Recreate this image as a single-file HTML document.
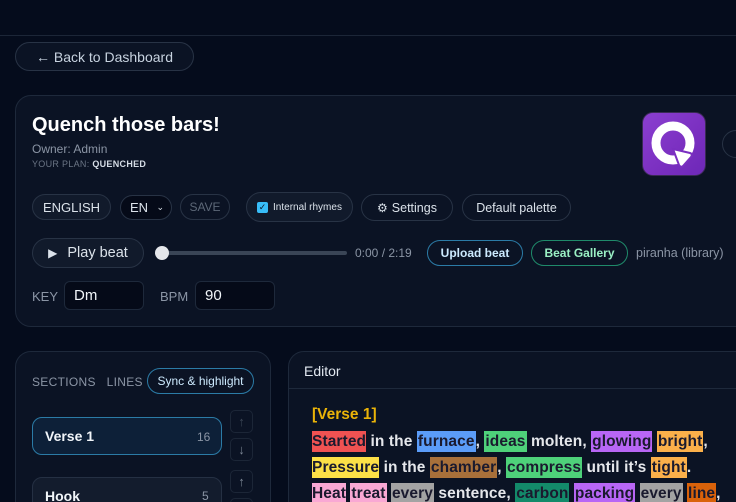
<!DOCTYPE html>
<html><head><meta charset="utf-8"><style>
*{box-sizing:border-box;margin:0;padding:0}
html,body{width:736px;height:502px;overflow:hidden}
body{background:#050c1c;font-family:"Liberation Sans",sans-serif;color:#e2e8f0;position:relative}
.a{position:absolute}
.pill{position:absolute;border:1px solid #283345;border-radius:999px;background:#111a2b;display:flex;align-items:center;justify-content:center;font-size:13px;color:#dbe2ea}
.panel{position:absolute;background:#0b1324;border:1px solid #1e293b;border-radius:16px}
.inp{position:absolute;background:#050a18;border:1px solid #1e293b;border-radius:6px;font-size:15px;color:#f1f5f9;padding-left:9px;display:flex;align-items:center}
.hl{color:#1a1a2e;padding:2px 1px}
.ed{font-size:15.5px;font-weight:bold;line-height:26px;color:#e5e7eb;white-space:nowrap;letter-spacing:.1px}
.arr{position:absolute;width:23px;height:23px;border:1px solid #1c2637;border-radius:5px;color:#7b8594;font-size:13px;display:flex;align-items:center;justify-content:center}
</style></head><body>
<div class="a" style="left:0;top:35px;width:736px;height:1px;background:#1c2637"></div>
<div class="pill" style="left:15px;top:42px;width:179px;height:29px;font-size:14px;background:#0b1324;color:#c8d3e0">← Back to Dashboard</div>

<div class="panel" style="left:15px;top:95px;width:740px;height:232px"></div>
<div class="a" style="left:32px;top:114px;font-size:20px;font-weight:bold;color:#fff">Quench those bars!</div>
<div class="a" style="left:32px;top:142px;font-size:12px;color:#8b95a5">Owner: Admin</div>
<div class="a" style="left:32px;top:159px;font-size:9px;color:#6b7585;letter-spacing:.3px">YOUR PLAN: <b style="color:#d6dde6">QUENCHED</b></div>
<div class="a" style="left:642px;top:112px;width:64px;height:64px;border-radius:11px;background:linear-gradient(135deg,#8b3fd0,#7a2fc0 60%,#6d28b8);border:1px solid #3a2a55">
<svg width="64" height="64" viewBox="0 0 64 64"><circle cx="30" cy="30" r="17" fill="none" stroke="#fff" stroke-width="9"/><path d="M30 36 L47 40 Q50 41 48 44 L40 53 Q38 55 36 52 Z" fill="#fff" stroke="#7a2fc0" stroke-width="2"/></svg></div>
<div class="a" style="left:722px;top:130px;width:30px;height:28px;border:1px solid #283345;border-radius:14px"></div>

<div class="pill" style="left:32px;top:194px;width:79px;height:26px;font-size:13px">ENGLISH</div>
<div class="pill" style="left:120px;top:195px;width:52px;height:25px;background:#050a18;font-size:13px;justify-content:flex-start;padding-left:9px">EN<span style="position:absolute;right:7px;font-size:9px">⌄</span></div>
<div class="pill" style="left:180px;top:194px;width:50px;height:26px;background:#0b1324;color:#5d6878;font-size:12px">SAVE</div>
<div class="pill" style="left:246px;top:192px;width:107px;height:30px;font-size:10px"><span style="width:11px;height:11px;background:#38bdf8;border-radius:2px;color:#0b1324;font-size:9px;line-height:11px;text-align:center;margin-right:5px">✓</span>Internal rhymes</div>
<div class="pill" style="left:361px;top:194px;width:92px;height:27px;background:#0b1324;font-size:12.5px"><span style="font-size:12px;margin-right:4px">⚙</span>Settings</div>
<div class="pill" style="left:462px;top:194px;width:109px;height:27px;background:#0b1324;font-size:12.5px">Default palette</div>

<div class="pill" style="left:32px;top:238px;width:112px;height:30px;font-size:14.5px"><span style="font-size:12px;margin-right:10px">▶</span>Play beat</div>
<div class="a" style="left:162px;top:251px;width:185px;height:4px;border-radius:2px;background:#3a4556"></div>
<div class="a" style="left:155px;top:246px;width:14px;height:14px;border-radius:50%;background:#e5e7eb"></div>
<div class="a" style="left:355px;top:246px;font-size:12px;color:#8b95a5">0:00 / 2:19</div>
<div class="pill" style="left:427px;top:240px;width:96px;height:26px;background:#0b1324;border-color:#2b7ba6;color:#cdeafe;font-weight:bold;font-size:12px">Upload beat</div>
<div class="pill" style="left:531px;top:240px;width:97px;height:26px;background:#0b1324;border-color:#1f8a6a;color:#9af0c4;font-weight:bold;font-size:12px">Beat Gallery</div>
<div class="a" style="left:636px;top:246px;font-size:12.5px;color:#8b95a5">piranha (library)</div>

<div class="a" style="left:32px;top:289px;font-size:13px;color:#8b95a5">KEY</div>
<div class="inp" style="left:64px;top:281px;width:80px;height:29px">Dm</div>
<div class="a" style="left:160px;top:289px;font-size:13px;color:#8b95a5">BPM</div>
<div class="inp" style="left:195px;top:281px;width:80px;height:29px">90</div>

<div class="panel" style="left:15px;top:351px;width:256px;height:170px"></div>
<div class="a" style="left:32px;top:375px;font-size:12px;color:#8b95a5;letter-spacing:.3px">SECTIONS&nbsp;&nbsp; LINES</div>
<div class="pill" style="left:147px;top:368px;width:107px;height:26px;background:#0b1324;border-color:#2b7ba6;color:#cdeafe;font-size:12px">Sync &amp; highlight</div>
<div class="a" style="left:32px;top:417px;width:190px;height:38px;border:1px solid #2b7ba6;border-radius:10px;background:#0d2038"></div>
<div class="a" style="left:45px;top:428px;font-size:14px;font-weight:bold;color:#f1f5f9">Verse 1</div>
<div class="a" style="left:197px;top:430px;font-size:12px;color:#8b95a5">16</div>
<div class="arr" style="left:230px;top:410px;color:#3c4656">↑</div>
<div class="arr" style="left:230px;top:438px">↓</div>
<div class="a" style="left:32px;top:477px;width:190px;height:40px;border:1px solid #253043;border-radius:10px;background:#131c2d"></div>
<div class="a" style="left:45px;top:488px;font-size:14px;font-weight:bold;color:#f1f5f9">Hook</div>
<div class="a" style="left:202px;top:489px;font-size:12px;color:#8b95a5">5</div>
<div class="arr" style="left:230px;top:470px">↑</div>
<div class="arr" style="left:230px;top:498px">↓</div>

<div class="panel" style="left:288px;top:351px;width:470px;height:170px"></div>
<div class="a" style="left:288px;top:388px;width:448px;height:1px;background:#1e293b"></div>
<div class="a" style="left:304px;top:363px;font-size:14px;color:#e2e8f0">Editor</div>
<div class="a" style="left:312px;top:406px;font-size:15.5px;font-weight:bold;color:#eab308">[Verse 1]</div>
<div class="a ed" style="left:312px;top:429px">
<span class="hl" style="background:#f05252;padding:2px 0">Started</span> in the <span class="hl" style="background:#5b9cf8">furnace</span>, <span class="hl" style="background:#4ed17a">ideas</span> molten, <span class="hl" style="background:#b866f5">glowing</span> <span class="hl" style="background:#fbb04a">bright</span>,<br>
<span class="hl" style="background:#fde047;padding:2px 0">Pressure</span> in the <span class="hl" style="background:#a8703a">chamber</span>, <span class="hl" style="background:#4ed17a">compress</span> until it’s <span class="hl" style="background:#fbb04a">tight</span>.<br>
<span class="hl" style="background:#f9a8d4;padding:2px 0">Heat</span> <span class="hl" style="background:#f9a8d4">treat</span> <span class="hl" style="background:#a3a3a3">every</span> sentence, <span class="hl" style="background:#138a6a">carbon</span> <span class="hl" style="background:#b866f5">packing</span> <span class="hl" style="background:#a3a3a3">every</span> <span class="hl" style="background:#d9620a">line</span>,
</div>
</body></html>
